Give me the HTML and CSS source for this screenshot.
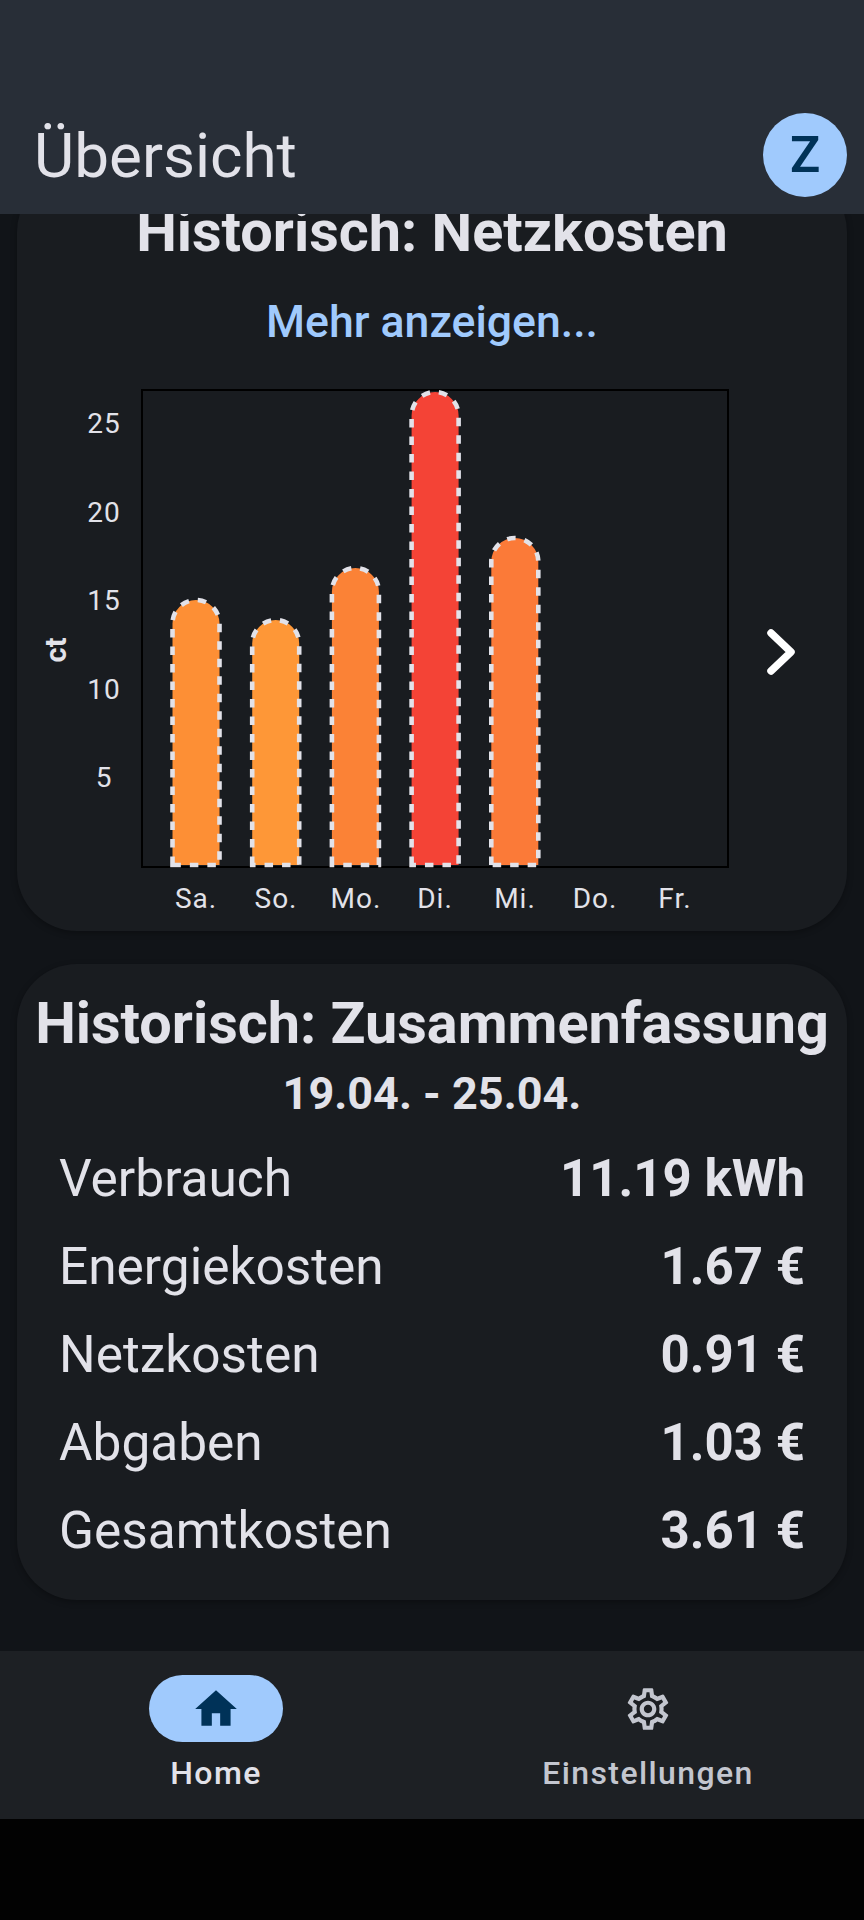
FILE: index.html
```html
<!DOCTYPE html>
<html lang="de">
<head>
    <meta charset="UTF-8">
    <meta name="viewport" content="width=device-width, initial-scale=1.0">
    <title>Übersicht</title>
    <link rel="stylesheet" href="styles.css">
</head>
<body>
    <header class="app-bar">
        <h1 class="app-title">Übersicht</h1>
        <div class="avatar">Z</div>
    </header>

    <main class="content">
        <!-- Chart card, scrolled a little under the app bar -->
        <section class="card card-chart">
            <h2 class="card-title">Historisch: Netzkosten</h2>
            <a class="more-link" href="#">Mehr anzeigen...</a>
            <div class="chart-row">
                <svg class="chart" viewBox="17 380 714 540" width="714" height="540">
                    <rect class="plot-frame" x="142" y="390" width="586" height="477"/>

                    <text class="axis-title" transform="translate(66 650) rotate(-90)">ct</text>
                    <text class="tick" x="104" y="433">25</text>
                    <text class="tick" x="104" y="522">20</text>
                    <text class="tick" x="104" y="610">15</text>
                    <text class="tick" x="104" y="699">10</text>
                    <text class="tick" x="104" y="787">5</text>

                    <path class="bar" fill="#fd8f35" d="M172.5 865V623.5A23.5 23.5 0 0 1 219.5 623.5V865Z"/>
                    <path class="bar" fill="#fe9737" d="M252.2 865V643.5A23.5 23.5 0 0 1 299.2 643.5V865Z"/>
                    <path class="bar" fill="#fb8236" d="M331.9 865V591.5A23.5 23.5 0 0 1 378.9 591.5V865Z"/>
                    <path class="bar" fill="#f44336" d="M411.6 865V415.5A23.5 23.5 0 0 1 458.6 415.5V865Z"/>
                    <path class="bar" fill="#fb7a38" d="M491.3 865V561.5A23.5 23.5 0 0 1 538.3 561.5V865Z"/>

                    <text class="tick" x="196" y="908">Sa.</text>
                    <text class="tick" x="276" y="908">So.</text>
                    <text class="tick" x="356" y="908">Mo.</text>
                    <text class="tick" x="435" y="908">Di.</text>
                    <text class="tick" x="515" y="908">Mi.</text>
                    <text class="tick" x="595" y="908">Do.</text>
                    <text class="tick" x="675" y="908">Fr.</text>
                </svg>
                <button class="next-btn" type="button" aria-label="Weiter">
                    <svg viewBox="0 0 28 46" width="28" height="46">
                        <path d="M4 4L24 23L4 42" fill="none" stroke="#fff" stroke-width="7.5" stroke-linecap="round" stroke-linejoin="round"/>
                    </svg>
                </button>
            </div>
        </section>

        <section class="card card-summary">
            <h2 class="card-title">Historisch: Zusammenfassung</h2>
            <div class="date-range">19.04. - 25.04.</div>
            <div class="summary-list">
                <div class="summary-row"><span>Verbrauch</span><strong>11.19 kWh</strong></div>
                <div class="summary-row"><span>Energiekosten</span><strong>1.67 €</strong></div>
                <div class="summary-row"><span>Netzkosten</span><strong>0.91 €</strong></div>
                <div class="summary-row"><span>Abgaben</span><strong>1.03 €</strong></div>
                <div class="summary-row"><span>Gesamtkosten</span><strong>3.61 €</strong></div>
            </div>
        </section>
    </main>

    <nav class="nav-bar">
        <a class="nav-item active" href="#">
            <span class="nav-icon">
                <svg viewBox="0 0 24 24" width="50" height="50"><path d="M10 20v-6h4v6h5v-8h3L12 3 2 12h3v8z"/></svg>
            </span>
            <span class="nav-label">Home</span>
        </a>
        <a class="nav-item" href="#">
            <span class="nav-icon">
                <svg viewBox="0 0 24 24" width="50" height="50"><path d="M19.43 12.98c.04-.32.07-.64.07-.98 0-.34-.03-.66-.07-.98l2.11-1.65c.19-.15.24-.42.12-.64l-2-3.46c-.09-.16-.26-.25-.44-.25-.06 0-.12.01-.17.03l-2.49 1c-.52-.4-1.08-.73-1.69-.98l-.38-2.65C14.46 2.18 14.25 2 14 2h-4c-.25 0-.46.18-.49.42l-.38 2.65c-.61.25-1.17.59-1.69.98l-2.49-1c-.06-.02-.12-.03-.18-.03-.17 0-.34.09-.43.25l-2 3.46c-.13.22-.07.49.12.64l2.11 1.65c-.04.32-.07.65-.07.98 0 .33.03.66.07.98l-2.11 1.65c-.19.15-.24.42-.12.64l2 3.46c.09.16.26.25.44.25.06 0 .12-.01.17-.03l2.49-1c.52.4 1.08.73 1.69.98l.38 2.65c.03.24.24.42.49.42h4c.25 0 .46-.18.49-.42l.38-2.65c.61-.25 1.17-.59 1.69-.98l2.49 1c.06.02.12.03.18.03.17 0 .34-.09.43-.25l2-3.46c.12-.22.07-.49-.12-.64l-2.11-1.65zm-1.98-1.71c.04.31.05.52.05.73 0 .21-.02.43-.05.73l-.14 1.13.89.7 1.08.84-.7 1.21-1.27-.51-1.04-.42-.9.68c-.43.32-.84.56-1.25.73l-1.06.43-.16 1.13-.2 1.35h-1.4l-.19-1.35-.16-1.13-1.06-.43c-.43-.18-.83-.41-1.23-.71l-.91-.7-1.06.43-1.27.51-.7-1.21 1.08-.84.89-.7-.14-1.13c-.03-.31-.05-.54-.05-.74s.02-.43.05-.73l.14-1.13-.89-.7-1.08-.84.7-1.21 1.27.51 1.04.42.9-.68c.43-.32.84-.56 1.25-.73l1.06-.43.16-1.13.2-1.35h1.39l.19 1.35.16 1.13 1.06.43c.43.18.83.41 1.23.71l.91.7 1.06-.43 1.27-.51.7 1.21-1.07.85-.89.7.14 1.13zM12 8c-2.21 0-4 1.79-4 4s1.79 4 4 4 4-1.79 4-4-1.79-4-4-4zm0 6c-1.1 0-2-.9-2-2s.9-2 2-2 2 .9 2 2-.9 2-2 2z"/></svg>
            </span>
            <span class="nav-label">Einstellungen</span>
        </a>
    </nav>

    <!-- System navigation area -->
    <div class="system-bar"></div>
</body>
</html>
```

FILE: styles.css
```css
/* Global Styles */
* {
    box-sizing: border-box;
}

body {
    margin: 0;
    height: 1920px;
    display: flex;
    flex-direction: column;
    overflow: hidden;
    font-family: 'Roboto', sans-serif;
    background: #111418;
    color: #e2e2e9;
}

/* App Bar */
.app-bar {
    flex: 0 0 214px;
    display: flex;
    justify-content: space-between;
    align-items: center;
    padding: 113px 17px 17px 34px;
    background: #282e37;
    position: relative;
    z-index: 1;
}

.app-title {
    margin: 0;
    height: 84px;
    font-size: 62px;
    font-weight: 400;
    line-height: 86px;
}

.avatar {
    width: 84px;
    height: 84px;
    display: flex;
    justify-content: center;
    align-items: center;
    border-radius: 50%;
    background: #a0cafd;
    color: #003258;
    font-size: 50px;
    font-weight: 600;
}

/* Cards */
.content {
    flex: 1;
    min-height: 0;
    padding: 0 17px;
    display: flex;
    flex-direction: column;
    gap: 33px;
    overflow: hidden;
}

.card {
    flex: none;
    background: #191c20;
    border-radius: 60px;
    padding-top: 25px;
    box-shadow: 0 2px 6px rgba(0, 0, 0, 0.3);
    text-align: center;
}

.card-chart {
    margin-top: -42px;
    padding-bottom: 11px;
}

.card-summary {
    padding-bottom: 26px;
}

.card-title {
    margin: 0;
    font-size: 57.6px;
    font-weight: 700;
    line-height: 70px;
    white-space: nowrap;
}

.more-link {
    display: block;
    margin-top: 20px;
    font-size: 44.6px;
    font-weight: 500;
    line-height: 70px;
    color: #a0cafd;
    text-decoration: none;
}

/* Chart */
.chart-row {
    display: flex;
    align-items: center;
    margin-top: 23px;
}

.chart {
    display: block;
    flex: none;
}

.plot-frame {
    fill: none;
    stroke: #000;
    stroke-width: 2;
}

.bar {
    stroke: #e2e2e9;
    stroke-width: 4.6;
    stroke-dasharray: 8.5 9;
}

.tick {
    fill: #e2e2e9;
    font-size: 28px;
    letter-spacing: 1px;
    text-anchor: middle;
}

.axis-title {
    fill: #e2e2e9;
    font-size: 29px;
    font-weight: 700;
    text-anchor: middle;
}

.next-btn {
    width: 100px;
    height: 100px;
    margin-top: 4px;
    display: flex;
    justify-content: center;
    align-items: center;
    padding: 0;
    border: none;
    background: none;
}

/* Summary */
.date-range {
    font-size: 45px;
    font-weight: 700;
    line-height: 70px;
}

.summary-list {
    margin-top: 5px;
    padding: 0 42px;
}

.summary-row {
    height: 88px;
    display: flex;
    justify-content: space-between;
    align-items: center;
    font-size: 51.4px;
}

.summary-row strong {
    font-size: 51px;
    font-weight: 700;
}

/* Bottom Navigation */
.nav-bar {
    flex: 0 0 168px;
    display: grid;
    grid-template-columns: 1fr 1fr;
    background: #1d2024;
}

.nav-item {
    display: flex;
    flex-direction: column;
    align-items: center;
    padding-top: 24px;
    color: #c3c6cf;
    text-decoration: none;
}

.nav-icon {
    width: 134px;
    height: 67px;
    display: flex;
    justify-content: center;
    align-items: center;
    border-radius: 34px;
}

.nav-icon svg {
    fill: currentColor;
}

.nav-label {
    margin-top: 15px;
    font-size: 32px;
    font-weight: 500;
    line-height: 32px;
    letter-spacing: 1.4px;
}

.nav-item.active {
    color: #e2e2e9;
}

.nav-item.active .nav-icon {
    background: #a0cafd;
    color: #003258;
}

.system-bar {
    flex: 0 0 101px;
    background: #020202;
}
```
